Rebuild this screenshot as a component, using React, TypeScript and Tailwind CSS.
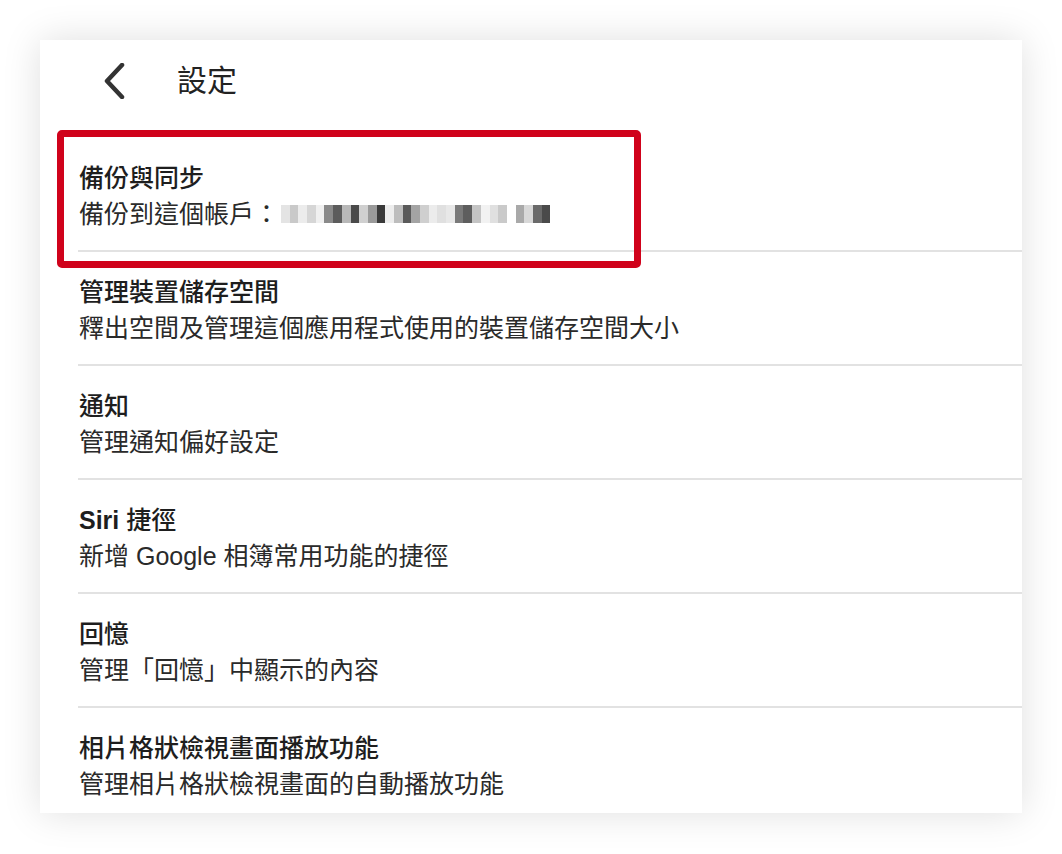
import type { ReactNode } from "react";

const items: { title: ReactNode; sub: string; blur?: boolean }[] = [
  { title: "備份與同步", sub: "備份到這個帳戶：", blur: true },
  { title: "管理裝置儲存空間", sub: "釋出空間及管理這個應用程式使用的裝置儲存空間大小" },
  { title: "通知", sub: "管理通知偏好設定" },
  { title: <><span className="font-bold">Siri</span> 捷徑</>, sub: "新增 Google 相簿常用功能的捷徑" },
  { title: "回憶", sub: "管理「回憶」中顯示的內容" },
  { title: "相片格狀檢視畫面播放功能", sub: "管理相片格狀檢視畫面的自動播放功能" },
];

// pixelated (mosaic) email address
const blocks = [
  "#e4e4e4", "#c9c9c9", "#ececec", "#d6d6d6", "#f0f0f0", "#8a8a8a", "#5c5c5c", "#b8b8b8",
  "#4a4a4a", "#d0d0d0", "#9a9a9a", "#3a3a3a", "#ededed", "#bdbdbd", "#5a5a5a", "#a4a4a4",
  "#cfcfcf", "#ececec", "#e0e0e0", "#e8e8e8", "#7a7a7a", "#5e5e5e", "#c4c4c4", "#f2f2f2",
  "#e0e0e0", "#cacaca", "#ffffff", "#a9a9a9", "#d8d8d8", "#6a6a6a", "#4a4a4a",
];

function Mosaic() {
  return (
    <span className="inline-flex h-[18px] items-stretch ml-[2px]">
      {blocks.map((c, i) => (
        <span key={i} className="w-[8.7px] h-full" style={{ background: c }} />
      ))}
    </span>
  );
}

export default function App() {
  return (
    <div
      className="w-[1062px] h-[854px] bg-white pt-[40px] pl-[40px]"
      style={{ fontFamily: '"Liberation Sans", "Noto Sans CJK TC", sans-serif' }}
    >
      <div className="relative w-[982px] h-[773px] bg-white overflow-hidden shadow-[0_0_36px_rgba(0,0,0,0.13)]">
        <div className="flex items-center h-[98px] pb-[16px]">
          <svg className="ml-[62px]" width="24" height="36" viewBox="0 0 24 36" fill="none">
            <path d="M20 2 L5 18 L20 34" stroke="#333" strokeWidth="4.5" strokeLinecap="round" strokeLinejoin="round" />
          </svg>
          <span className="ml-[51px] text-[30px] text-[#222] leading-none">設定</span>
        </div>

        <div className="ml-[38px]">
          {items.map((it, i) => (
            <div key={i} className="pt-[22px] pb-[18px] pl-[1px] border-b-2 border-[#e2e2e2]">
              <div className="text-[25px] leading-[36px] font-medium text-[#1e1e1e]">{it.title}</div>
              <div className="text-[25px] leading-[36px] text-[#2a2a2a] flex items-center">
                {it.sub}
                {it.blur && <Mosaic />}
              </div>
            </div>
          ))}
        </div>

        <div className="absolute left-[17px] top-[90px] w-[584px] h-[138px] border-[7px] border-[#d0021b] rounded-[5px]" />
      </div>
    </div>
  );
}
